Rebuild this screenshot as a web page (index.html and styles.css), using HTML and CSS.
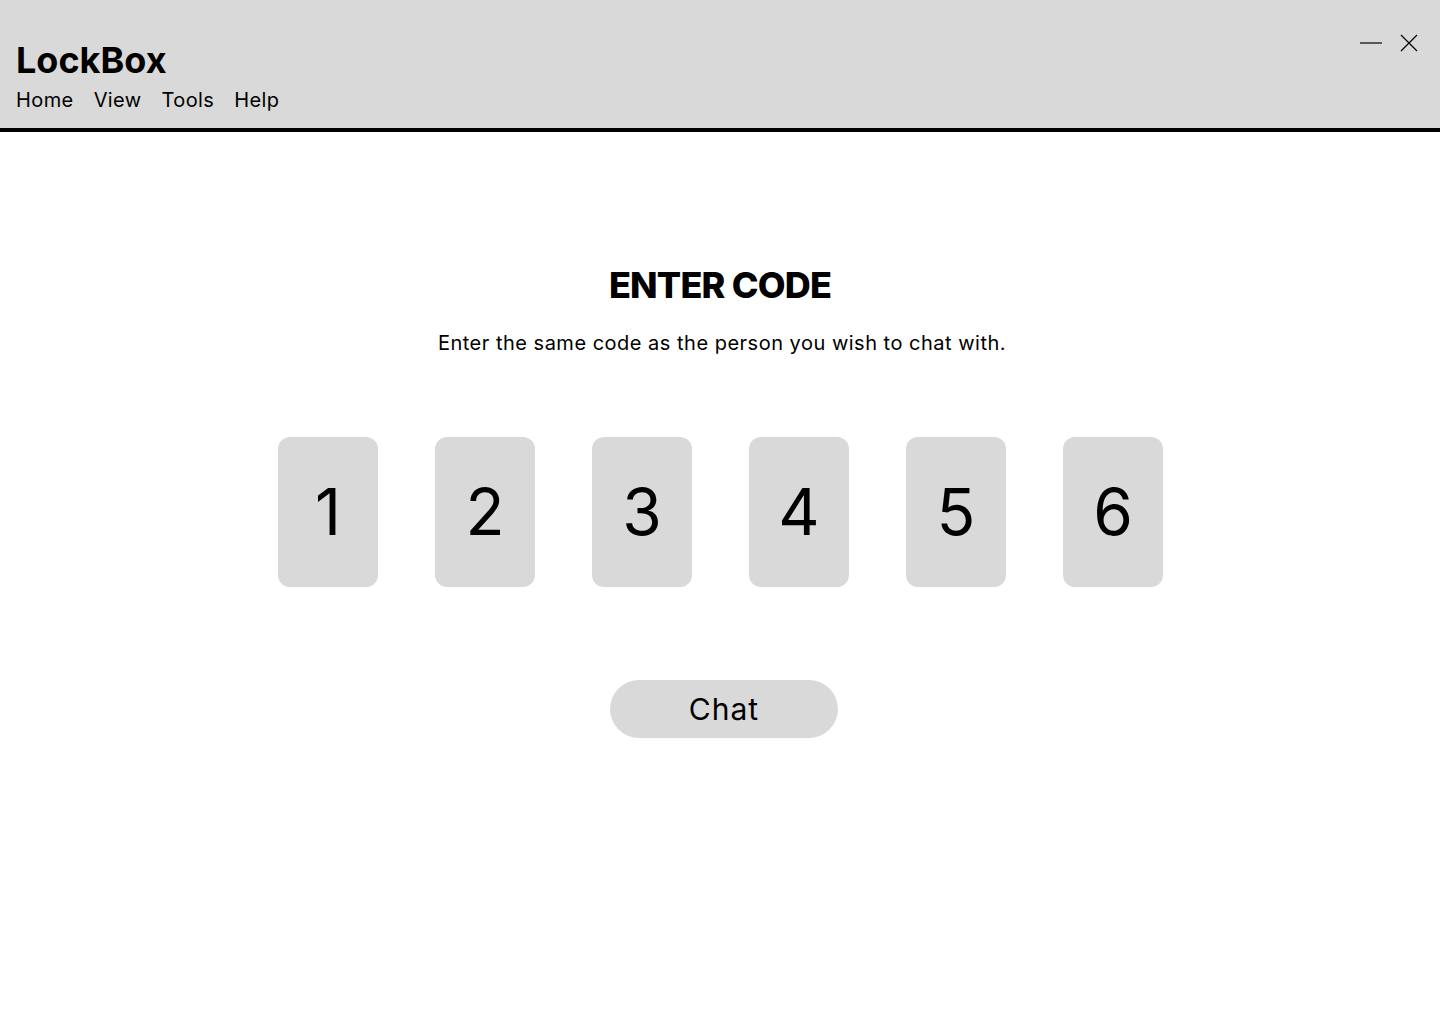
FILE: index.html
```html
<!DOCTYPE html>
<html lang="en">
<head>
<meta charset="utf-8">
<title>LockBox</title>
<link rel="stylesheet" href="styles.css">
</head>
<body>
<header class="titlebar">
  <div class="brand">
    <h1 class="logo">LockBox</h1>
    <nav class="menu">
      <span class="menu-item">Home</span>
      <span class="menu-item">View</span>
      <span class="menu-item">Tools</span>
      <span class="menu-item">Help</span>
    </nav>
  </div>
  <div class="window-controls">
    <svg class="ctrl" width="24" height="18" viewBox="0 0 24 18"><line x1="1" y1="9" x2="23" y2="9" stroke="#000" stroke-width="1.2"/></svg>
    <svg class="ctrl" width="20" height="18" viewBox="0 0 20 18"><path d="M2 1 L18 17 M18 1 L2 17" stroke="#000" stroke-width="1.2" fill="none"/></svg>
  </div>
</header>
<main class="content">
  <h2 class="title">ENTER CODE</h2>
  <p class="subtitle">Enter the same code as the person you wish to chat with.</p>
  <div class="code-row">
    <div class="digit">1</div>
    <div class="digit">2</div>
    <div class="digit">3</div>
    <div class="digit">4</div>
    <div class="digit">5</div>
    <div class="digit">6</div>
  </div>
  <button class="chat-btn">Chat</button>
</main>
</body>
</html>
```
FILE: styles.css
```css
* { box-sizing: border-box; }
html, body { margin: 0; padding: 0; background: #fff; }
body {
  font-family: Inter, "Open Sans", "Liberation Sans", sans-serif;
  color: #000;
  width: 1440px;
  height: 1024px;
  overflow: hidden;
}
.titlebar {
  height: 132px;
  background: #d9d9d9;
  border-bottom: 4px solid #000;
  display: flex;
  justify-content: space-between;
  align-items: flex-start;
  padding: 38px 16px 0 16px;
}
.logo {
  margin: 0;
  font-size: 36px;
  font-weight: 700;
  line-height: 44px;
  letter-spacing: 0;
}
.menu {
  display: flex;
  gap: 20px;
  font-size: 20px;
  line-height: 24px;
  margin-top: 6px;
  letter-spacing: 0.4px;
}
.window-controls {
  display: flex;
  align-items: center;
  gap: 16px;
  margin-top: -4px;
  margin-right: 5px;
}
.ctrl { display: block; }
.content {
  display: flex;
  flex-direction: column;
  align-items: center;
  padding-top: 131px;
}
.title {
  margin: 0;
  font-size: 36px;
  font-weight: 800;
  line-height: 44px;
  letter-spacing: -0.8px;
}
.subtitle {
  margin: 24px 0 0 0;
  font-size: 20px;
  line-height: 24px;
  padding-left: 4px;
  letter-spacing: 0.5px;
}
.code-row {
  display: flex;
  gap: 57px;
  margin-top: 82px;
  padding-left: 1px;
}
.digit {
  width: 100px;
  height: 150px;
  background: #d9d9d9;
  border-radius: 12px;
  display: flex;
  align-items: center;
  justify-content: center;
  font-size: 64px;
  line-height: 1;
}
.chat-btn {
  margin-top: 93px;
  margin-left: 8px;
  width: 228px;
  height: 58px;
  border: none;
  border-radius: 29px;
  background: #d9d9d9;
  font-family: inherit;
  font-size: 30px;
  letter-spacing: 1px;
  color: #000;
  padding: 0;
}
```
